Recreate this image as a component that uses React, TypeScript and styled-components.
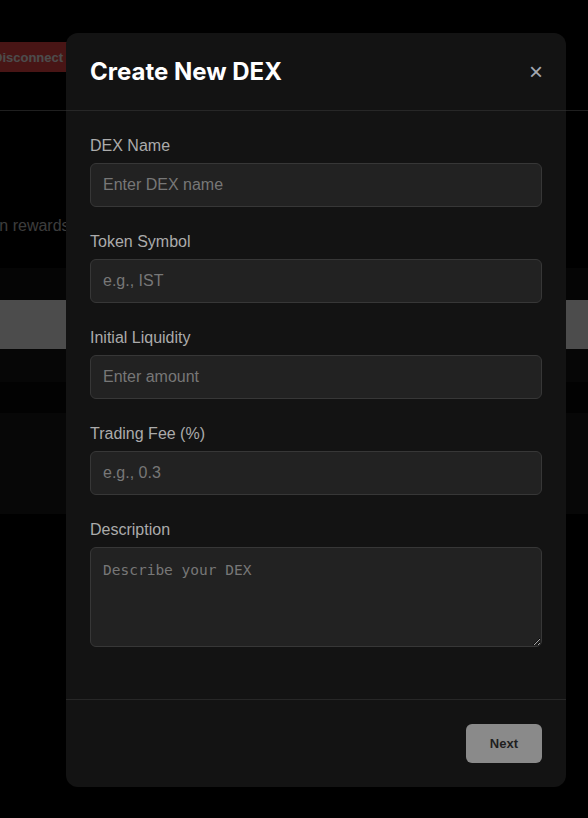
import React from "react";
import styled, { createGlobalStyle } from "styled-components";

const GlobalStyle = createGlobalStyle`
  html, body {
    margin: 0;
    padding: 0;
    background: #000;
    overflow: hidden;
  }
  body {
    font-family: "Liberation Sans", Arial, sans-serif;
  }
  * {
    box-sizing: border-box;
  }
`;

/* page behind the modal */

const Page = styled.div`
  min-height: 818px;
  background: #000;
  color: #ccc;
`;

const TopBar = styled.header`
  height: 111px;
  border-bottom: 1px solid #6a6a6a;
  display: flex;
  align-items: flex-start;
  padding-top: 42px;
  margin-left: -21px;
`;

const DisconnectButton = styled.button`
  height: 30px;
  padding: 0 14px;
  border: 0;
  border-radius: 4px;
  background: #f04848;
  color: #fff;
  font-family: "Liberation Sans", Arial, sans-serif;
  font-weight: 700;
  font-size: 13px;
`;

const Hero = styled.section`
  padding-top: 106px;
`;

const Subtitle = styled.p`
  margin: 0;
  width: 74px;
  display: flex;
  justify-content: flex-end;
  white-space: nowrap;
  font-size: 16px;
  line-height: 18px;
  color: #c8c8c8;
`;

const Table = styled.div`
  margin-top: 33px;
  display: flex;
  flex-direction: column;
`;

const TableRow = styled.div<{ $h: number; $bg: string }>`
  height: ${(p) => p.$h}px;
  background: ${(p) => p.$bg};
`;

/* modal */

const Overlay = styled.div`
  position: fixed;
  inset: 0;
  background: rgba(0, 0, 0, 0.7);
  display: flex;
  align-items: center;
  padding: 2px 0 0 66px;
`;

const Modal = styled.div`
  width: 500px;
  background: #131313;
  border-radius: 12px;
  display: flex;
  flex-direction: column;
`;

const ModalHeader = styled.div`
  display: flex;
  align-items: center;
  justify-content: space-between;
  padding: 24px;
  border-bottom: 1px solid #272727;
`;

const Title = styled.h2`
  margin: 0;
  font-family: Inter, "Liberation Sans", sans-serif;
  font-weight: 700;
  font-size: 24px;
  line-height: 29px;
  color: #fff;
`;

const CloseButton = styled.button`
  background: none;
  border: 0;
  padding: 0;
  margin-right: -1px;
  color: #a3a8b0;
  font-family: "Liberation Sans", Arial, sans-serif;
  font-size: 24px;
  line-height: 1;
  cursor: pointer;
`;

const ModalBody = styled.div`
  padding: 24px 24px 28px;
`;

const Field = styled.div`
  margin-bottom: 24px;
`;

const Label = styled.label`
  display: block;
  margin-bottom: 7px;
  font-size: 16px;
  line-height: 21px;
  color: #ababab;
`;

const Input = styled.input`
  display: block;
  width: 100%;
  height: 44px;
  padding: 0 12px;
  background: #222;
  border: 1px solid #373737;
  border-radius: 6px;
  color: #fff;
  font-family: "Liberation Sans", Arial, sans-serif;
  font-size: 16px;
  outline: none;
  &::placeholder {
    color: #777;
  }
`;

const TextArea = styled.textarea`
  display: block;
  width: 100%;
  height: 100px;
  padding: 14px 12px 12px;
  background: #222;
  border: 1px solid #373737;
  border-radius: 6px;
  color: #fff;
  font-family: "DejaVu Sans Mono", monospace;
  font-size: 14.5px;
  outline: none;
  &::placeholder {
    color: #777;
  }
`;

const ModalFooter = styled.div`
  display: flex;
  justify-content: flex-end;
  padding: 24px;
  border-top: 1px solid #272727;
`;

const NextButton = styled.button`
  padding: 12px 24px;
  border: 0;
  border-radius: 6px;
  background: #8a8a8a;
  color: #1f1f1f;
  font-family: "Liberation Sans", Arial, sans-serif;
  font-weight: 700;
  font-size: 13px;
  line-height: 15px;
`;

const fields = [
  { label: "DEX Name", placeholder: "Enter DEX name" },
  { label: "Token Symbol", placeholder: "e.g., IST" },
  { label: "Initial Liquidity", placeholder: "Enter amount" },
  { label: "Trading Fee (%)", placeholder: "e.g., 0.3" },
];

export default function App() {
  return (
    <>
      <GlobalStyle />
      <Page>
        <TopBar>
          <DisconnectButton>Disconnect</DisconnectButton>
        </TopBar>
        <Hero>
          <Subtitle>Create your own decentralized exchange and earn rewards.</Subtitle>
          <Table>
            <TableRow $h={32} $bg="#111" />
            <TableRow $h={49} $bg="#fff" />
            <TableRow $h={33} $bg="#141414" />
            <TableRow $h={31} $bg="#070707" />
            <TableRow $h={101} $bg="#1a1a1a" />
          </Table>
        </Hero>
      </Page>

      <Overlay>
        <Modal>
          <ModalHeader>
            <Title>Create New DEX</Title>
            <CloseButton aria-label="Close">×</CloseButton>
          </ModalHeader>
          <ModalBody>
            {fields.map((f) => (
              <Field key={f.label}>
                <Label>{f.label}</Label>
                <Input placeholder={f.placeholder} />
              </Field>
            ))}
            <Field>
              <Label>Description</Label>
              <TextArea placeholder="Describe your DEX" />
            </Field>
          </ModalBody>
          <ModalFooter>
            <NextButton>Next</NextButton>
          </ModalFooter>
        </Modal>
      </Overlay>
    </>
  );
}
